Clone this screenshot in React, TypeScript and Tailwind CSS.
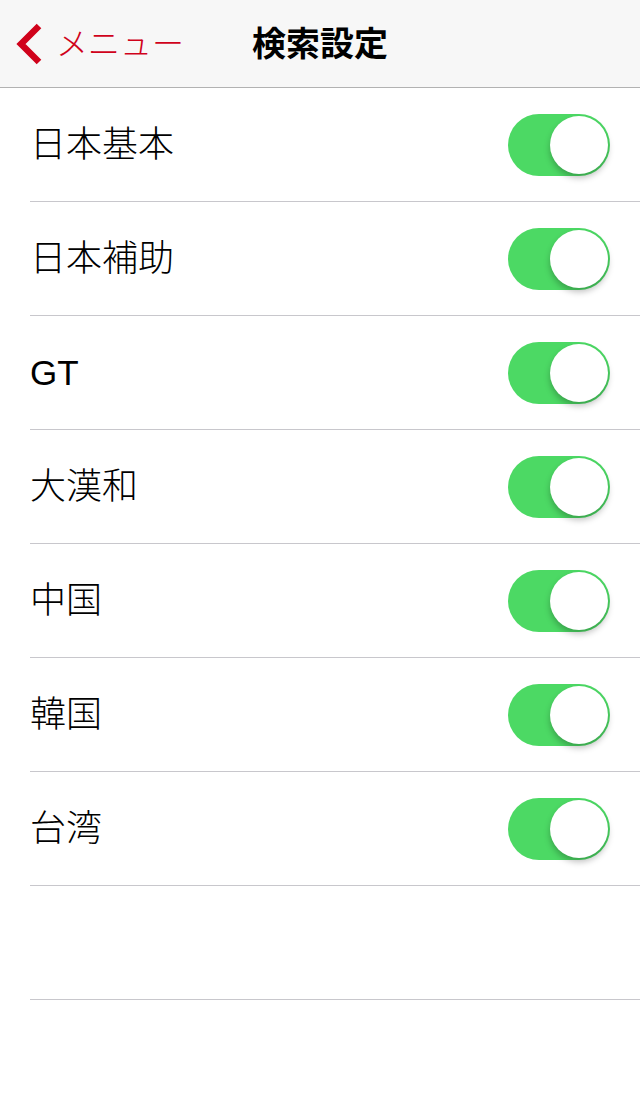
import React, { useState } from "react";

const items = ["日本基本", "日本補助", "GT", "大漢和", "中国", "韓国", "台湾"];

const font = { fontFamily: '"Liberation Sans", "Noto Sans CJK JP", sans-serif' };

function Toggle({ on, onChange }: { on: boolean; onChange: () => void }) {
  return (
    <button
      onClick={onChange}
      className={
        "relative w-[102px] h-[62px] rounded-full transition-colors " +
        (on ? "bg-[#4cd964]" : "bg-white border-2 border-[#e5e5ea]")
      }
    >
      <span
        className={
          "absolute top-[2px] w-[58px] h-[58px] rounded-full bg-white shadow-[0_4px_6px_rgba(0,0,0,0.25)] transition-all " +
          (on ? "right-[2px]" : "left-[2px]")
        }
      />
    </button>
  );
}

export default function App() {
  const [state, setState] = useState<boolean[]>(items.map(() => true));

  return (
    <div className="w-[640px] h-[1096px] bg-white" style={font}>
      {/* nav bar */}
      <div className="relative h-[88px] bg-[#f7f7f7] border-b border-[#b2b2b2] flex items-center">
        <div className="flex items-center pl-[16px] text-[#d0021b]">
          <svg width="28" height="42" viewBox="0 0 28 42">
            <path d="M23 3 L5 21 L23 39" fill="none" stroke="#d0021b" strokeWidth="6.5" />
          </svg>
          <span className="ml-[12px] text-[32px] font-light leading-none">メニュー</span>
        </div>
        <div className="absolute inset-0 flex items-center justify-center pointer-events-none">
          <span className="text-[34px] font-bold text-black leading-none">検索設定</span>
        </div>
      </div>

      {/* list */}
      <div className="pl-[30px]">
        {items.map((label, i) => (
          <div key={label} className="h-[114px] border-b border-[#c8c7cc] flex items-center justify-between pr-[30px]">
            {/^[A-Z]+$/.test(label) ? (
              <span className="text-[35px] text-black leading-none">{label}</span>
            ) : (
              <span className="text-[36px] font-light text-black leading-none">{label}</span>
            )}
            <Toggle
              on={state[i]}
              onChange={() => setState((s) => s.map((v, j) => (j === i ? !v : v)))}
            />
          </div>
        ))}
        <div className="h-[114px] border-b border-[#c8c7cc]" />
      </div>
    </div>
  );
}
